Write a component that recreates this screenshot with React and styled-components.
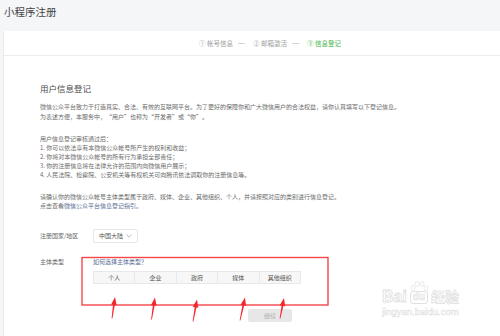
import React from "react";
import styled, { createGlobalStyle } from "styled-components";

const GlobalStyle = createGlobalStyle`
  html, body {
    margin: 0;
    padding: 0;
  }
  body {
    width: 500px;
    height: 336px;
    overflow: hidden;
    background: #f5f6f8;
    font-family: "Noto Sans CJK SC", "Noto Sans", sans-serif;
    color: #555;
  }
`;

const steps = [
    { no: "①", label: "帐号信息" },
    { no: "②", label: "邮箱激活" },
    { no: "③", label: "信息登记", active: true },
];

const rights = [
    "1. 你可以依法享有本微信公众帐号所产生的权利和收益；",
    "2. 你将对本微信公众帐号的所有行为承担全部责任；",
    "3. 你的注册信息将在法律允许的范围内向微信用户展示；",
    "4. 人民法院、检察院、公安机关等有权机关可向腾讯依法调取你的注册信息等。",
];

const types = ["个人", "企业", "政府", "媒体", "其他组织"];

// tip and tail of the hand drawn red arrows
const arrows = [
    [115, 297, 112, 318.5],
    [155, 297.5, 151.5, 319.5],
    [197, 299.5, 193, 321.5],
    [245, 297.5, 240, 320.5],
    [284, 298, 280, 318.5],
];

const arrowPath = ([tx, ty, bx, by]) => {
    const len = Math.hypot(tx - bx, ty - by);
    const ux = (tx - bx) / len;
    const uy = (ty - by) / len;
    const nx = -uy;
    const ny = ux;
    const hx = tx - ux * 8;
    const hy = ty - uy * 8;
    const p = (x, y) => `${x.toFixed(2)},${y.toFixed(2)}`;
    return [
        p(tx, ty),
        p(hx + nx * 2.8, hy + ny * 2.8),
        p(hx + nx * 0.9, hy + ny * 0.9),
        p(bx + nx * 0.4, by + ny * 0.4),
        p(bx - nx * 0.4, by - ny * 0.4),
        p(hx - nx * 0.9, hy - ny * 0.9),
        p(hx - nx * 2.8, hy - ny * 2.8),
    ].join(" ");
};

export default function App() {
    return (
        <Page>
            <GlobalStyle />
            <Title>小程序注册</Title>
            <Card>
                <StepBar>
                    {steps.map((s, i) => (
                        <React.Fragment key={s.no}>
                            {i > 0 && <StepLine />}
                            <Step $active={s.active}>
                                {s.no} {s.label}
                            </Step>
                        </React.Fragment>
                    ))}
                </StepBar>
                <Body>
                    <Heading>用户信息登记</Heading>
                    <Para $lh={9.5}>
                        微信公众平台致力于打造真实、合法、有效的互联网平台。为了更好的保障你和广大微信用户的合法权益，请你认真填写以下登记信息。
                        <br />
                        为表述方便，本服务中，“用户”也称为“开发者”或“你”。
                    </Para>
                    <Para $gap={12.5}>
                        用户信息登记审核通过后：
                        {rights.map((r) => (
                            <React.Fragment key={r}>
                                <br />
                                {r}
                            </React.Fragment>
                        ))}
                    </Para>
                    <Para $gap={13.5}>
                        请确认你的微信公众帐号主体类型属于政府、媒体、企业、其他组织、个人，并请按照对应的类别进行信息登记。
                        <br />
                        点击查看<Link>微信公众平台信息登记指引</Link>。
                    </Para>

                    <FormRow $gap={18.5}>
                        <Label>注册国家/地区</Label>
                        <Select>
                            中国大陆
                            <svg width="6" height="4" viewBox="0 0 6 4">
                                <path
                                    d="M0.6 0.8 L3 3 L5.4 0.8"
                                    fill="none"
                                    stroke="#aaa"
                                    strokeWidth="0.8"
                                />
                            </svg>
                        </Select>
                    </FormRow>

                    <FormRow $gap={14} $top>
                        <Label>主体类型</Label>
                        <TypeField>
                            <Link>如何选择主体类型？</Link>
                            <TypeList>
                                {types.map((t) => (
                                    <TypeCell key={t}>{t}</TypeCell>
                                ))}
                            </TypeList>
                        </TypeField>
                    </FormRow>

                    <NextButton>继续</NextButton>
                </Body>
            </Card>

            <Marks width="500" height="336" viewBox="0 0 500 336">
                <rect
                    x="82"
                    y="257.5"
                    width="246"
                    height="47.5"
                    fill="none"
                    stroke="#f4474a"
                    strokeWidth="1.4"
                />
                {arrows.map((a) => (
                    <polygon key={a[0]} points={arrowPath(a)} fill="#f4272c" />
                ))}
            </Marks>

            <Watermark>
                <WmTop>
                    <WmLetters>Bai</WmLetters>
                    <WmPaw>
                        <svg width="20" height="10" viewBox="0 0 20 10">
                            <g fill="none" stroke="#e3e3e3" strokeWidth="0.8">
                                <ellipse cx="4" cy="7" rx="2" ry="2.4" />
                                <ellipse cx="8" cy="3" rx="2" ry="2.4" />
                                <ellipse cx="13" cy="3" rx="2" ry="2.4" />
                                <ellipse cx="17" cy="7" rx="2" ry="2.4" />
                            </g>
                        </svg>
                        <WmDu>du</WmDu>
                    </WmPaw>
                    <WmCn>经验</WmCn>
                </WmTop>
                <WmUrl>jingyan.baidu.com</WmUrl>
            </Watermark>
        </Page>
    );
}

const Page = styled.div`
    position: relative;
    width: 500px;
    height: 336px;
    padding-left: 3px;
    box-sizing: border-box;
    overflow: hidden;
`;

const Title = styled.h1`
    margin: 0 0 13px;
    padding: 6px 0 0 1px;
    font-size: 10.5px;
    line-height: 12px;
    font-weight: 400;
    color: #444;
`;

const Card = styled.section`
    width: 540px;
    height: 320px;
    background: #fff;
    border-left: 1px solid #ebebeb;
`;

const StepBar = styled.div`
    display: flex;
    align-items: center;
    height: 24px;
    padding-left: 195px;
    border-bottom: 1px solid #ececec;
    font-size: 6.5px;
`;

const Step = styled.span`
    color: ${(p) => (p.$active ? "#44b549" : "#a0a0a0")};
    white-space: nowrap;
`;

const StepLine = styled.span`
    width: 7px;
    height: 1px;
    margin: 0 8px 0 5px;
    background: #d6d6d6;
`;

const Body = styled.div`
    padding: 26px 0 0 36px;
`;

const Heading = styled.h2`
    margin: 0 0 8px;
    font-size: 8.5px;
    line-height: 12px;
    font-weight: 400;
    color: #4a4a4a;
`;

const Para = styled.p`
    margin: ${(p) => p.$gap || 0}px 0 0;
    font-size: 6px;
    line-height: ${(p) => p.$lh || 9}px;
    color: #6a6a6a;
    white-space: nowrap;
`;

const Link = styled.span`
    color: #576b95;
`;

const FormRow = styled.div`
    display: flex;
    align-items: ${(p) => (p.$top ? "flex-start" : "center")};
    margin-top: ${(p) => p.$gap}px;
    font-size: 6px;
`;

const Label = styled.div`
    width: 53px;
    line-height: 10px;
    color: #666;
`;

const Select = styled.div`
    display: flex;
    align-items: center;
    justify-content: space-between;
    box-sizing: border-box;
    width: 45px;
    height: 14px;
    padding: 0 5px;
    border: 1px solid #e6e6e6;
    border-radius: 2px;
    color: #555;
`;

const TypeField = styled.div`
    display: flex;
    flex-direction: column;
    line-height: 10px;
`;

const TypeList = styled.div`
    display: flex;
    margin-top: 4.5px;
`;

const TypeCell = styled.div`
    display: flex;
    align-items: center;
    justify-content: center;
    box-sizing: border-box;
    width: 42.4px;
    height: 13px;
    border: 1px solid #e8e8e8;
    margin-left: -1px;
    background: #f7f7f7;
    color: #555;
    &:first-child {
        margin-left: 0;
    }
`;

const NextButton = styled.div`
    display: flex;
    align-items: center;
    justify-content: center;
    width: 44px;
    height: 13px;
    margin: 25px 0 0 208px;
    border-radius: 2px;
    background: #e7e7e7;
    color: #b3b3b3;
    font-size: 6px;
`;

const Marks = styled.svg`
    position: absolute;
    left: 0;
    top: 0;
    pointer-events: none;
`;

const Watermark = styled.div`
    position: absolute;
    left: 382px;
    top: 281px;
    display: flex;
    flex-direction: column;
    pointer-events: none;
`;

const WmTop = styled.div`
    display: flex;
    align-items: flex-end;
`;

const WmLetters = styled.span`
    font-family: "Liberation Sans", sans-serif;
    font-size: 16px;
    line-height: 15px;
    font-weight: 700;
    color: #fff;
    -webkit-text-stroke: 0.8px #e0e0e0;
`;

const WmPaw = styled.span`
    display: flex;
    flex-direction: column;
    align-items: center;
    margin: 0 2px;
`;

const WmDu = styled.span`
    font-family: "Liberation Sans", sans-serif;
    font-size: 10px;
    line-height: 10px;
    font-weight: 700;
    padding: 0 2px 1px;
    border: 0.8px solid #e0e0e0;
    border-radius: 3px;
    color: #fff;
    -webkit-text-stroke: 0.6px #e0e0e0;
`;

const WmCn = styled.span`
    font-size: 14px;
    line-height: 15px;
    font-weight: 700;
    color: #fff;
    -webkit-text-stroke: 0.7px #e0e0e0;
`;

const WmUrl = styled.span`
    margin-top: 3px;
    font-family: "Liberation Sans", sans-serif;
    font-size: 9.5px;
    line-height: 10px;
    color: #fff;
    -webkit-text-stroke: 0.5px #e0e0e0;
`;
